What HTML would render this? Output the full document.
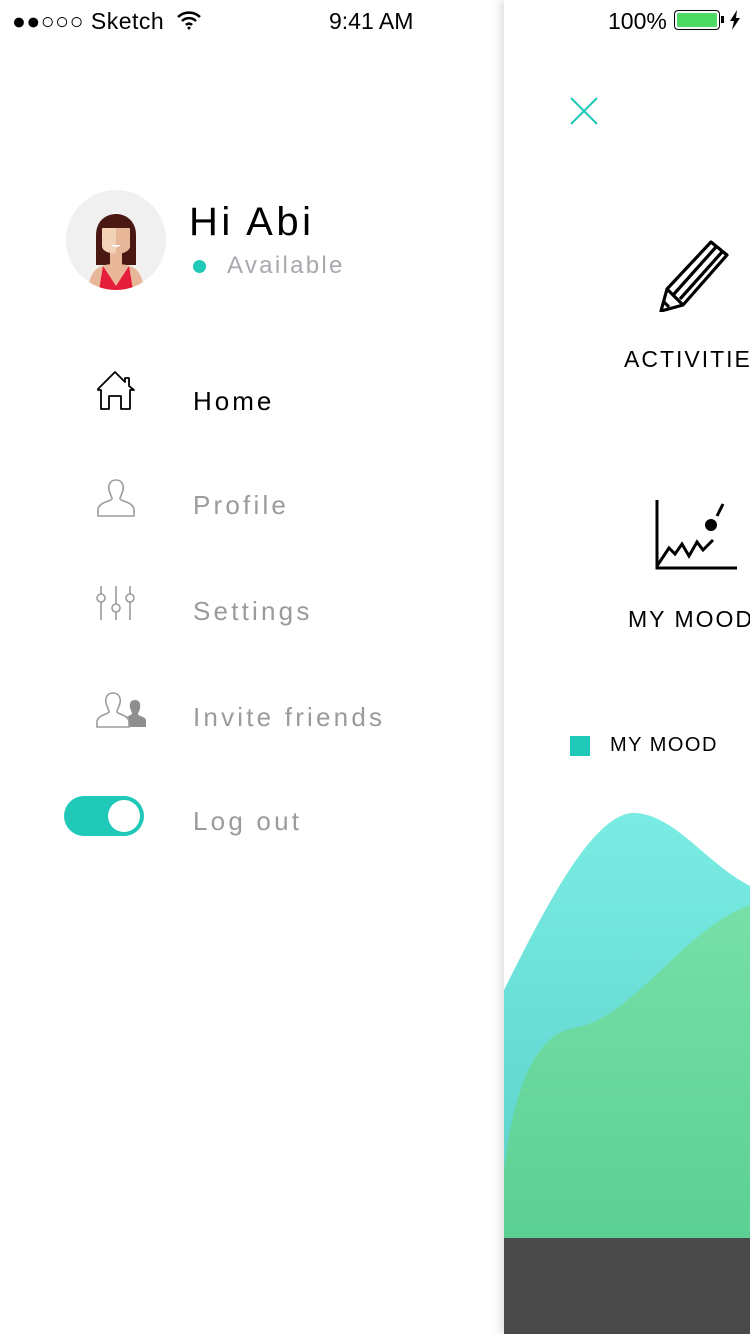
<!DOCTYPE html>
<html><head><meta charset="utf-8"><style>
*{margin:0;padding:0;box-sizing:border-box}
body{width:750px;height:1334px;overflow:hidden;background:#fff;font-family:"Liberation Sans",sans-serif;position:relative}
.a{position:absolute}
.menu{font-size:26px;letter-spacing:3.2px;color:#9b9b9b}
</style></head><body>
<div class="a" style="left:504px;top:0;width:246px;height:1334px;background:#fff;box-shadow:-4px 0 8px rgba(0,0,0,0.12)"></div>
<div class="a" style="left:12px;top:8px;font-size:23px;color:#000;letter-spacing:0.5px">●●○○○ Sketch</div>
<svg class="a" style="left:176px;top:10px" width="26" height="20" viewBox="0 0 26 20"><path d="M2 7a16 16 0 0 1 22 0M6 11a10 10 0 0 1 14 0M10 15a4 4 0 0 1 6 0" stroke="#000" stroke-width="2.5" fill="none"/><circle cx="13" cy="18" r="1.5"/></svg>
<div class="a" style="left:329px;top:8px;font-size:23px">9:41 AM</div>
<div class="a" style="left:608px;top:8px;font-size:23px">100%</div>
<div class="a" style="left:674px;top:10px;width:46px;height:20px;border:1.5px solid #000;border-radius:4px;padding:2px"><div style="width:100%;height:100%;background:#4cd964;border-radius:2px"></div></div>
<div class="a" style="left:721px;top:16px;width:3px;height:7px;background:#000"></div>
<svg class="a" style="left:729px;top:10px" width="12" height="20" viewBox="0 0 12 20"><path d="M8 0L1 11h4l-2 9 8-12H7z" fill="#000"/></svg>
<div class="a" style="left:66px;top:190px;width:100px;height:100px;border-radius:50%;background:#f0f0f0;overflow:hidden">
<svg width="100" height="100" viewBox="0 0 100 100"><path d="M30 45c0-28 40-28 40 0v30H30z" fill="#4a1812"/><path d="M22 100c2-20 10-26 28-26s26 6 28 26z" fill="#e8b79a"/><path d="M33 100l4-24 13 20 13-20 4 24z" fill="#e41e3a"/><rect x="44" y="60" width="12" height="16" fill="#e8b79a"/><path d="M36 38h28v18c0 10-28 10-28 0z" fill="#f3d3b8"/><path d="M50 38h14v18c0 5-7 8-14 8z" fill="#e8b79a"/><path d="M34 40c2-18 30-18 32 0-8-8-24-8-32 0z" fill="#4a1812"/><path d="M45 55q5 4 10 0z" fill="#fff"/></svg></div>
<div class="a" style="left:189px;top:200px;font-size:40px;letter-spacing:3.5px;color:#000">Hi Abi</div>
<div class="a" style="left:193px;top:260px;width:13px;height:13px;border-radius:50%;background:#1fc8b7"></div>
<div class="a" style="left:227px;top:252px;font-size:24px;letter-spacing:2.3px;color:#a8a8ae">Available</div>
<svg class="a" style="left:95px;top:369px" width="42" height="42" viewBox="0 0 42 42"><path d="M3 20L20 3l10 10V9h4v8l5 4h-4v19H26V27H14v13H6V21H3z" fill="none" stroke="#000" stroke-width="1.8" stroke-linejoin="round"/></svg>
<div class="a" style="left:193px;top:386px;font-size:26px;letter-spacing:3px;color:#000">Home</div>
<svg class="a" style="left:95px;top:477px" width="42" height="42" viewBox="0 0 42 42"><path d="M21 3c-6 0-8 5-7 10 1 4 3 7 3 9 0 2-14 3-14 11v6h36v-6c0-8-14-9-14-11 0-2 2-5 3-9 1-5-1-10-7-10z" fill="none" stroke="#9b9b9b" stroke-width="1.6"/></svg>
<div class="a menu" style="left:193px;top:490px">Profile</div>
<svg class="a" style="left:95px;top:586px" width="42" height="36" viewBox="0 0 42 36"><g stroke="#9b9b9b" stroke-width="1.6" fill="none"><path d="M6 0v8M6 16v18M21 0v18M21 26v8M35 0v8M35 16v18"/><circle cx="6" cy="12" r="4"/><circle cx="21" cy="22" r="4"/><circle cx="35" cy="12" r="4"/></g></svg>
<div class="a menu" style="left:193px;top:596px">Settings</div>
<svg class="a" style="left:95px;top:690px" width="52" height="40" viewBox="0 0 52 40"><path d="M40 10c-4 0-6 3-5 8 1 3 2 4 2 6l-5 3 1 10h18v-7c0-3-8-4-8-6 0-2 2-3 2-6 1-5-1-8-5-8z" fill="#8f8f8f"/><path d="M18 3c-6 0-8 5-7 10 1 4 3 7 3 9 0 2-12 3-12 10v5h32v-5c0-7-12-8-12-10 0-2 2-5 3-9 1-5-1-10-7-10z" fill="#fff" stroke="#9b9b9b" stroke-width="1.6"/></svg>
<div class="a menu" style="left:193px;top:702px">Invite friends</div>
<div class="a" style="left:64px;top:796px;width:80px;height:40px;border-radius:20px;background:#1fc8b7"><div style="position:absolute;right:4px;top:4px;width:32px;height:32px;border-radius:50%;background:#fff"></div></div>
<div class="a menu" style="left:193px;top:806px">Log out</div>
<svg class="a" style="left:570px;top:97px" width="28" height="28"><path d="M1 1l26 26M27 1L1 27" stroke="#1fc8b7" stroke-width="2"/></svg>
<svg class="a" style="left:658px;top:238px" width="76" height="74" viewBox="0 0 76 74"><g fill="none" stroke="#000" stroke-width="3.2" stroke-linejoin="round"><path d="M53 4l16 13-44 50-22 6 6-22z"/><path d="M9 51l16 16M58 9L16 56M64 14L22 61"/><path d="M6 64l5 5"/></g></svg>
<div class="a" style="left:624px;top:346px;font-size:23px;letter-spacing:2px;white-space:nowrap">ACTIVITIES</div>
<svg class="a" style="left:654px;top:500px" width="86" height="72" viewBox="0 0 86 72"><g fill="none" stroke="#000" stroke-width="3"><path d="M3 0v68h80"/><path d="M3 66l12-18 6 6 7-10 7 12 8-14 6 8 10-10"/><path d="M63 16l6-12"/></g><circle cx="57" cy="25" r="6"/></svg>
<div class="a" style="left:628px;top:606px;font-size:23px;letter-spacing:2px;white-space:nowrap">MY MOOD</div>
<div class="a" style="left:570px;top:736px;width:20px;height:20px;background:#1fc8b7"></div>
<div class="a" style="left:610px;top:734px;font-size:20px;letter-spacing:1.5px;white-space:nowrap">MY MOOD</div>
<svg class="a" style="left:504px;top:800px" width="246" height="440" viewBox="0 0 246 440"><defs><linearGradient id="c" x1="0" y1="0" x2="0" y2="1"><stop offset="0" stop-color="#7aece4"/><stop offset="1" stop-color="#5ad0c8"/></linearGradient><linearGradient id="g" x1="0" y1="0" x2="0" y2="1"><stop offset="0" stop-color="#76e0a8"/><stop offset="1" stop-color="#5ccf94"/></linearGradient></defs><path d="M0 190C40 110 90 10 132 13c40 3 70 50 114 73V440H0z" fill="url(#c)"/><path d="M0 370C10 290 30 235 70 228c60-10 110-100 176-123V440H0z" fill="url(#g)"/></svg>
<div class="a" style="left:504px;top:1238px;width:246px;height:96px;background:#4a4a4a"></div>
</body></html>
